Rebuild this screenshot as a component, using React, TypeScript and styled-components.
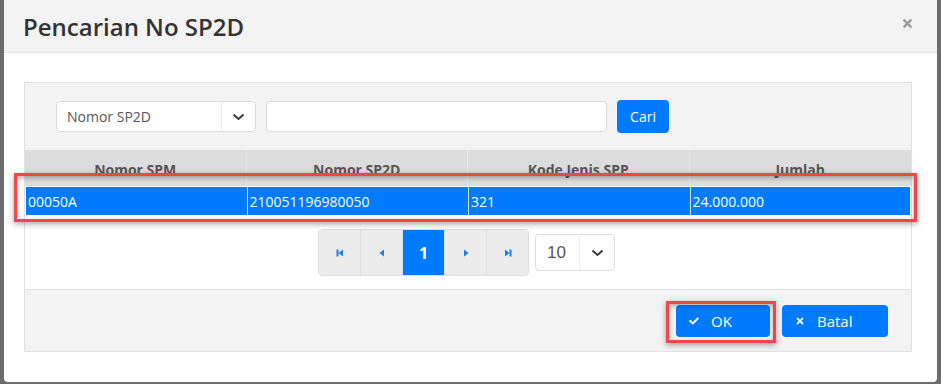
import styled, { createGlobalStyle } from "styled-components";
import { FaCheck, FaTimes } from "react-icons/fa";

const GlobalStyle = createGlobalStyle`
  body {
    margin: 0;
    background: #6c6c6c;
    font-family: "Open Sans", "Noto Sans", sans-serif;
  }
`;

const columns = ["Nomor SPM", "Nomor SP2D", "Kode Jenis SPP", "Jumlah"];
const row = ["00050A", "210051196980050", "321", "24.000.000"];

const Chevron = () => (
  <svg width="13" height="8" viewBox="0 0 13 8">
    <path d="M1.5 1.5 L6.5 6 L11.5 1.5" fill="none" stroke="#333" strokeWidth="1.8" />
  </svg>
);

const PagerIcon = ({ kind }: { kind: "first" | "prev" | "next" | "last" }) => (
  <svg width="10" height="10" viewBox="0 0 10 10">
    {kind === "first" && (
      <>
        <rect x="1.5" y="1.5" width="2" height="7" fill="#1a7ff0" />
        <path d="M8 1.5 L3.5 5 L8 8.5 Z" fill="#1a7ff0" />
      </>
    )}
    {kind === "prev" && <path d="M7 1.5 L2.5 5 L7 8.5 Z" fill="#1a7ff0" />}
    {kind === "next" && <path d="M3 1.5 L7.5 5 L3 8.5 Z" fill="#1a7ff0" />}
    {kind === "last" && (
      <>
        <path d="M2 1.5 L6.5 5 L2 8.5 Z" fill="#1a7ff0" />
        <rect x="6.5" y="1.5" width="2" height="7" fill="#1a7ff0" />
      </>
    )}
  </svg>
);

const App = () => {
  return (
    <Page>
      <GlobalStyle />
      <Modal>
        <Header>
          <Title>Pencarian No SP2D</Title>
          <CloseBtn>
            <FaTimes size={13} />
          </CloseBtn>
        </Header>
        <Body>
          <Panel>
            <SearchBar>
              <Select>
                <span>Nomor SP2D</span>
                <SelectArrow>
                  <Chevron />
                </SelectArrow>
              </Select>
              <SearchInput />
              <CariButton>Cari</CariButton>
            </SearchBar>
            <Table>
              {columns.map((c) => (
                <HeadCell key={c}>{c}</HeadCell>
              ))}
              {row.map((v) => (
                <Cell key={v}>{v}</Cell>
              ))}
            </Table>
            <PagerArea>
              <Pager>
                <PageBtn>
                  <PagerIcon kind="first" />
                </PageBtn>
                <PageBtn>
                  <PagerIcon kind="prev" />
                </PageBtn>
                <PageBtn $active>1</PageBtn>
                <PageBtn>
                  <PagerIcon kind="next" />
                </PageBtn>
                <PageBtn>
                  <PagerIcon kind="last" />
                </PageBtn>
              </Pager>
              <SizeSelect>
                <SizeValue>10</SizeValue>
                <SizeArrow>
                  <Chevron />
                </SizeArrow>
              </SizeSelect>
            </PagerArea>
            <Footer>
              <ActionButton $width={94}>
                <FaCheck size={10} />
                OK
              </ActionButton>
              <ActionButton $width={106}>
                <FaTimes size={10} />
                Batal
              </ActionButton>
            </Footer>
          </Panel>
        </Body>
      </Modal>
      <Highlight $left={14} $top={173} $width={903} $height={49} />
      <Highlight $left={666} $top={301} $width={110} $height={42} />
    </Page>
  );
};

const Page = styled.div`
  position: relative;
  width: 941px;
  height: 384px;
  overflow: hidden;
`;

const Modal = styled.div`
  margin-left: 4px;
  width: 933px;
  height: 382px;
  background: #fff;
  border-radius: 0 0 4px 4px;
  display: flex;
  flex-direction: column;
`;

const Header = styled.div`
  height: 52px;
  background: #f3f3f3;
  border-bottom: 1px solid #e2e2e2;
  display: flex;
  align-items: center;
  justify-content: space-between;
  padding: 0 23px 0 19px;
`;

const Title = styled.h4`
  margin: 0;
  font-size: 24px;
  font-weight: 600;
  color: #333;
`;

const CloseBtn = styled.span`
  display: flex;
  color: #9a9a9a;
  margin-top: -6px;
`;

const Body = styled.div`
  padding: 29px 25px 29px 20px;
`;

const Panel = styled.div`
  border: 1px solid #e2e2e2;
  display: flex;
  flex-direction: column;
`;

const SearchBar = styled.div`
  background: #f3f3f3;
  height: 67px;
  padding: 0 31px;
  display: flex;
  align-items: center;
  gap: 10px;
`;

const Select = styled.div`
  box-sizing: border-box;
  width: 200px;
  height: 31px;
  background: #fff;
  border: 1px solid #d9d9d9;
  border-radius: 4px;
  display: flex;
  align-items: center;
  justify-content: space-between;
  padding-left: 10px;
  font-size: 14px;
  color: #555;
`;

const SelectArrow = styled.span`
  height: 100%;
  width: 33px;
  border-left: 1px solid #ececec;
  display: flex;
  align-items: center;
  justify-content: center;
`;

const SearchInput = styled.div`
  box-sizing: border-box;
  width: 341px;
  height: 31px;
  background: #fff;
  border: 1px solid #d9d9d9;
  border-radius: 4px;
`;

const CariButton = styled.div`
  width: 52px;
  height: 33px;
  background: #007bff;
  color: #fff;
  border-radius: 4px;
  display: flex;
  align-items: center;
  justify-content: center;
  font-size: 14px;
`;

const Table = styled.div`
  display: grid;
  grid-template-columns: repeat(4, 1fr);
  grid-template-rows: 36px 30px;
`;

const HeadCell = styled.div`
  background: #dcdcdc;
  border-right: 1px solid #e6e6e6;
  color: #555;
  font-size: 14px;
  font-weight: 700;
  display: flex;
  align-items: center;
  justify-content: center;
  padding-top: 2px;
  &:nth-child(4) {
    border-right: none;
  }
`;

const Cell = styled.div`
  background: #007bff;
  color: #fff;
  font-size: 14px;
  display: flex;
  align-items: center;
  padding-left: 2px;
  border: 1px solid #fff;
  border-left-color: #cfe2ff;
  border-right: none;
  &:nth-child(5) {
    border-left-color: #fff;
  }
  &:nth-child(8) {
    border-right: 1px solid #fff;
  }
`;

const PagerArea = styled.div`
  height: 73px;
  background: #fff;
  border-bottom: 1px solid #e2e2e2;
  display: flex;
  align-items: center;
  justify-content: center;
  gap: 6px;
  padding-right: 3px;
`;

const Pager = styled.div`
  display: flex;
  border: 1px solid #dedede;
  border-radius: 4px;
  overflow: hidden;
  background: #ececec;
`;

const PageBtn = styled.div<{ $active?: boolean }>`
  width: 41px;
  height: 45px;
  display: flex;
  align-items: center;
  justify-content: center;
  background: ${({ $active }) => ($active ? "#007bff" : "#ececec")};
  color: #fff;
  font-size: 16px;
  font-weight: 700;
  border-left: 1px solid #e0e0e0;
  &:first-child {
    border-left: none;
  }
`;

const SizeSelect = styled.div`
  box-sizing: border-box;
  width: 80px;
  height: 37px;
  border: 1px solid #dcdcdc;
  border-radius: 4px;
  display: flex;
  align-items: center;
`;

const SizeValue = styled.span`
  flex: 1;
  padding-left: 11px;
  font-size: 17px;
  color: #555;
  font-family: "Liberation Sans", Arial, sans-serif;
`;

const SizeArrow = styled.span`
  width: 34px;
  height: 100%;
  border-left: 1px solid #ececec;
  display: flex;
  align-items: center;
  justify-content: center;
`;

const Footer = styled.div`
  height: 61px;
  background: #f3f3f3;
  display: flex;
  align-items: center;
  justify-content: flex-end;
  gap: 12px;
  padding-right: 23px;
`;

const ActionButton = styled.div<{ $width: number }>`
  width: ${({ $width }) => $width}px;
  height: 32px;
  box-sizing: border-box;
  background: #007bff;
  color: #fff;
  border-radius: 4px;
  display: flex;
  align-items: center;
  gap: 12px;
  padding-left: 13px;
  font-size: 15px;
`;

const Highlight = styled.div<{ $left: number; $top: number; $width: number; $height: number }>`
  position: absolute;
  left: ${({ $left }) => $left}px;
  top: ${({ $top }) => $top}px;
  width: ${({ $width }) => $width}px;
  height: ${({ $height }) => $height}px;
  box-sizing: border-box;
  border: 3px solid #ef4646;
  box-shadow: 0 2px 6px rgba(0, 0, 0, 0.35), inset 0 2px 5px rgba(0, 0, 0, 0.3);
  pointer-events: none;
`;

export default App;
